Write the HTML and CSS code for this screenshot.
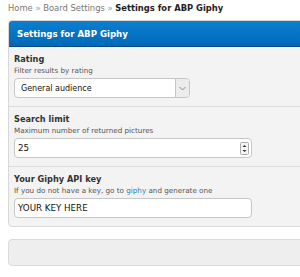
FILE: index.html
```html
<!DOCTYPE html>
<html lang="en">
<head>
  <meta charset="UTF-8">
  <title>Settings for ABP Giphy</title>
  <link rel="stylesheet" href="styles.css">
</head>
<body>
  <div class="breadcrumbs">
    <a href="#">Home</a> &raquo; <a href="#">Board Settings</a> &raquo; <strong>Settings for ABP Giphy</strong>
  </div>

  <div class="panel">
    <h3 class="panel-head">Settings for ABP Giphy</h3>

    <div class="field">
      <label class="field-title">Rating</label>
      <div class="field-help">Filter results by rating</div>
      <div class="select">
        <span>General audience</span>
        <span class="select-btn">
          <svg width="7" height="5" viewBox="0 0 7 5"><path d="M0.5 1 L3.5 4 L6.5 1" fill="none" stroke="#888" stroke-width="1"/></svg>
        </span>
      </div>
    </div>

    <div class="field">
      <label class="field-title">Search limit</label>
      <div class="field-help">Maximum number of returned pictures</div>
      <div class="input wide">
        <span>25</span>
        <span class="spin">
          <svg width="9" height="13" viewBox="0 0 9 13"><rect x="0.5" y="0.5" width="8" height="12" rx="1" fill="#f4f4f4" stroke="#aaa"/><path d="M2.5 5 L4.5 3 L6.5 5 Z M2.5 8 L4.5 10 L6.5 8 Z" fill="#333"/></svg>
        </span>
      </div>
    </div>

    <div class="field last">
      <label class="field-title">Your Giphy API key</label>
      <div class="field-help">If you do not have a key, go to <a href="#">giphy</a> and generate one</div>
      <div class="input wide">
        <span>YOUR KEY HERE</span>
      </div>
    </div>
  </div>

  <div class="submit-box"></div>
</body>
</html>
```

FILE: styles.css
```css
body {
  margin: 0;
  padding: 0 0 0 8px;
  background: #fff;
  font-family: "DejaVu Sans", Verdana, sans-serif;
  color: #333;
  overflow: hidden;
}
.breadcrumbs {
  font-size: 8.4px;
  color: #999;
  height: 14px;
  line-height: 14px;
  padding-top: 1px;
  white-space: nowrap;
}
.breadcrumbs a {
  color: #777;
  text-decoration: none;
}
.breadcrumbs strong {
  color: #222;
}
.panel {
  margin-top: 5px;
  width: 320px;
  background: #f3f3f3;
  border: 1px solid #d8d8d8;
  border-radius: 4px;
  overflow: hidden;
}
.panel-head {
  margin: 0;
  height: 25px;
  line-height: 26px;
  padding-left: 8px;
  font-size: 8.6px;
  color: #fff;
  background: linear-gradient(#0b7fd0, #0069b8);
  border-bottom: 1px solid #004a84;
}
.field {
  padding: 7px 0 8px 5px;
  border-bottom: 1px solid #dcdcdc;
}
.field.last {
  border-bottom: none;
  padding-bottom: 8px;
}
.field-title {
  display: block;
  font-size: 8.2px;
  font-weight: bold;
  color: #333;
  line-height: 11px;
}
.field-help {
  font-size: 7.2px;
  color: #555;
  line-height: 11px;
  margin-bottom: 2px;
}
.field-help a {
  color: #1f7bc3;
  text-decoration: none;
}
.select,
.input {
  box-sizing: border-box;
  height: 20px;
  background: #fff;
  border: 1px solid #c6c6c6;
  border-radius: 4px;
  display: flex;
  align-items: center;
  justify-content: space-between;
  font-size: 8px;
  color: #111;
  padding-left: 6px;
}
.select {
  width: 176px;
}
.input {
  padding-left: 3px;
  font-size: 8.7px;
}
.input.wide {
  width: 238px;
}
.select-btn {
  width: 13px;
  height: 18px;
  background: #ececec;
  border-left: 1px solid #c6c6c6;
  border-radius: 0 3px 3px 0;
  display: flex;
  align-items: center;
  justify-content: center;
}
.spin {
  display: flex;
  margin-right: 2px;
}
.submit-box {
  margin-top: 12px;
  width: 320px;
  height: 25px;
  background: #eeeeee;
  border: 1px solid #dadada;
  border-radius: 4px;
}
```
